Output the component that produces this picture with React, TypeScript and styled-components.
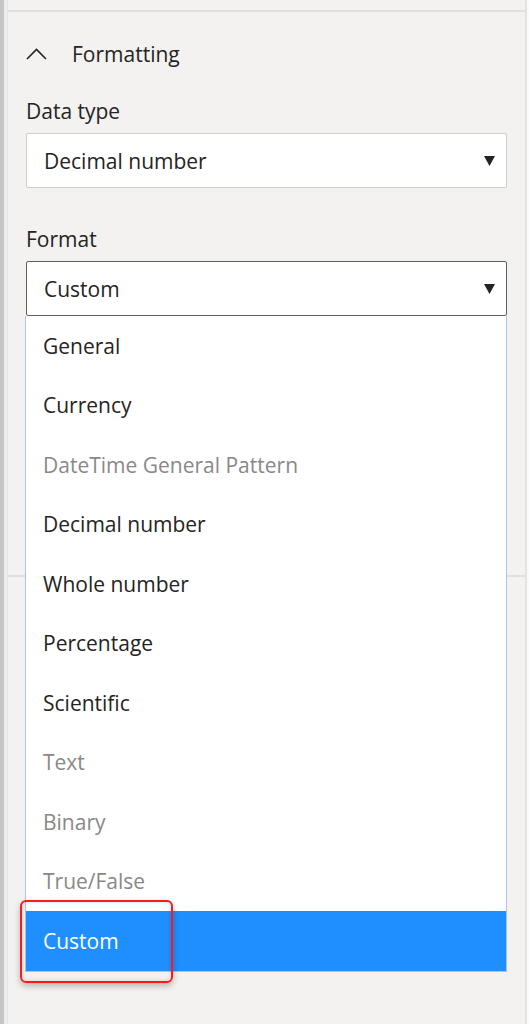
import styled, { createGlobalStyle } from "styled-components";

const GlobalStyle = createGlobalStyle`
  * {
    box-sizing: border-box;
  }

  body {
    margin: 0;
    background: #fafafa;
    font-family: "Open Sans", "Noto Sans", sans-serif;
    color: #252423;
  }
`;

type Option = {
  label: string;
  disabled?: boolean;
  selected?: boolean;
};

const formatOptions: Option[] = [
  { label: "General" },
  { label: "Currency" },
  { label: "DateTime General Pattern", disabled: true },
  { label: "Decimal number" },
  { label: "Whole number" },
  { label: "Percentage" },
  { label: "Scientific" },
  { label: "Text", disabled: true },
  { label: "Binary", disabled: true },
  { label: "True/False", disabled: true },
  { label: "Custom", selected: true },
];

function CaretDown() {
  return (
    <svg width="11" height="11" viewBox="0 0 11 11" aria-hidden>
      <polygon points="0,1 11,1 5.5,11" fill="#252423" />
    </svg>
  );
}

function ChevronUp() {
  return (
    <svg width="21" height="12" viewBox="0 0 21 12" aria-hidden>
      <polyline
        points="1,11 10.5,1.5 20,11"
        fill="none"
        stroke="#252423"
        strokeWidth="1.6"
      />
    </svg>
  );
}

export default function App() {
  return (
    <>
      <GlobalStyle />
      <Frame>
        <Rail />
        <RailGap />
        <Panel>
          <TopStrip />
          <Section>
            <SectionHeader>
              <ChevronUp />
              <SectionTitle>Formatting</SectionTitle>
            </SectionHeader>

            <FieldLabel>Data type</FieldLabel>
            <SelectBox>
              <SelectValue>Decimal number</SelectValue>
              <CaretDown />
            </SelectBox>

            <FieldLabel $gapTop={37}>Format</FieldLabel>
            <SelectWrap>
              <SelectBox $open>
                <SelectValue>Custom</SelectValue>
                <CaretDown />
              </SelectBox>

              <OptionList role="listbox">
                {formatOptions.map((opt) => (
                  <OptionItem
                    key={opt.label}
                    role="option"
                    aria-selected={!!opt.selected}
                    $disabled={opt.disabled}
                    $selected={opt.selected}
                  >
                    {opt.label}
                    {opt.selected && <Highlight aria-hidden />}
                  </OptionItem>
                ))}
              </OptionList>
            </SelectWrap>
          </Section>
          <Section />
        </Panel>
        <RightEdge />
      </Frame>
    </>
  );
}

const Frame = styled.div`
  display: flex;
  height: 1024px;
  overflow: hidden;
`;

const Rail = styled.div`
  width: 4px;
  background: #c6c6c6;
`;

const RailGap = styled.div`
  width: 3px;
  background: #ececec;
`;

const Panel = styled.div`
  flex: 1;
  display: flex;
  flex-direction: column;
  background: #f3f2f1;
  border-left: 1px solid #e6e6e6;
  border-right: 2px solid #e3e2e1;
`;

const TopStrip = styled.div`
  height: 10px;
`;

const Section = styled.section`
  border-top: 2px solid #e1dfdd;
  padding: 0 18px 259px 18px;
`;

const SectionHeader = styled.div`
  display: flex;
  align-items: center;
  gap: 25px;
  height: 40px;
  margin-top: 22px;
  margin-bottom: 23px;
`;

const SectionTitle = styled.span`
  font-size: 21px;
  line-height: 28px;
  color: #252423;
`;

const FieldLabel = styled.div<{ $gapTop?: number }>`
  font-size: 21px;
  line-height: 28px;
  margin-top: ${(p) => p.$gapTop ?? 0}px;
  margin-bottom: 8px;
  color: #252423;
`;

const SelectWrap = styled.div`
  position: relative;
`;

const SelectBox = styled.div<{ $open?: boolean }>`
  height: 55px;
  display: flex;
  align-items: center;
  justify-content: space-between;
  padding: 0 11px 0 17px;
  background: #ffffff;
  border: 1px solid ${(p) => (p.$open ? "#605e5c" : "#cfcdcb")};
  border-radius: 2px;
`;

const SelectValue = styled.span`
  font-size: 21px;
  line-height: 28px;
  color: #252423;
`;

const OptionList = styled.ul`
  position: absolute;
  top: 100%;
  left: -1px;
  right: 0;
  margin: 0;
  padding: 0;
  list-style: none;
  background: #ffffff;
  border: 1px solid #a9c4ea;
  border-top: none;
  z-index: 2;
`;

const OptionItem = styled.li<{ $disabled?: boolean; $selected?: boolean }>`
  position: relative;
  height: 59.5px;
  display: flex;
  align-items: center;
  padding-left: 17px;
  font-size: 21px;
  color: ${(p) => (p.$selected ? "#ffffff" : p.$disabled ? "#8a8886" : "#252423")};
  background: ${(p) => (p.$selected ? "#1f8fff" : "transparent")};
`;

const Highlight = styled.span`
  position: absolute;
  left: -6px;
  top: -11px;
  width: 153px;
  height: 83px;
  border: 2px solid #ff1a1a;
  border-radius: 6px;
  box-shadow:
    0 3px 6px rgba(0, 0, 0, 0.25),
    inset 0 0 4px rgba(0, 0, 0, 0.15);
  pointer-events: none;
`;

const RightEdge = styled.div`
  width: 2px;
  background: #fafafa;
`;
